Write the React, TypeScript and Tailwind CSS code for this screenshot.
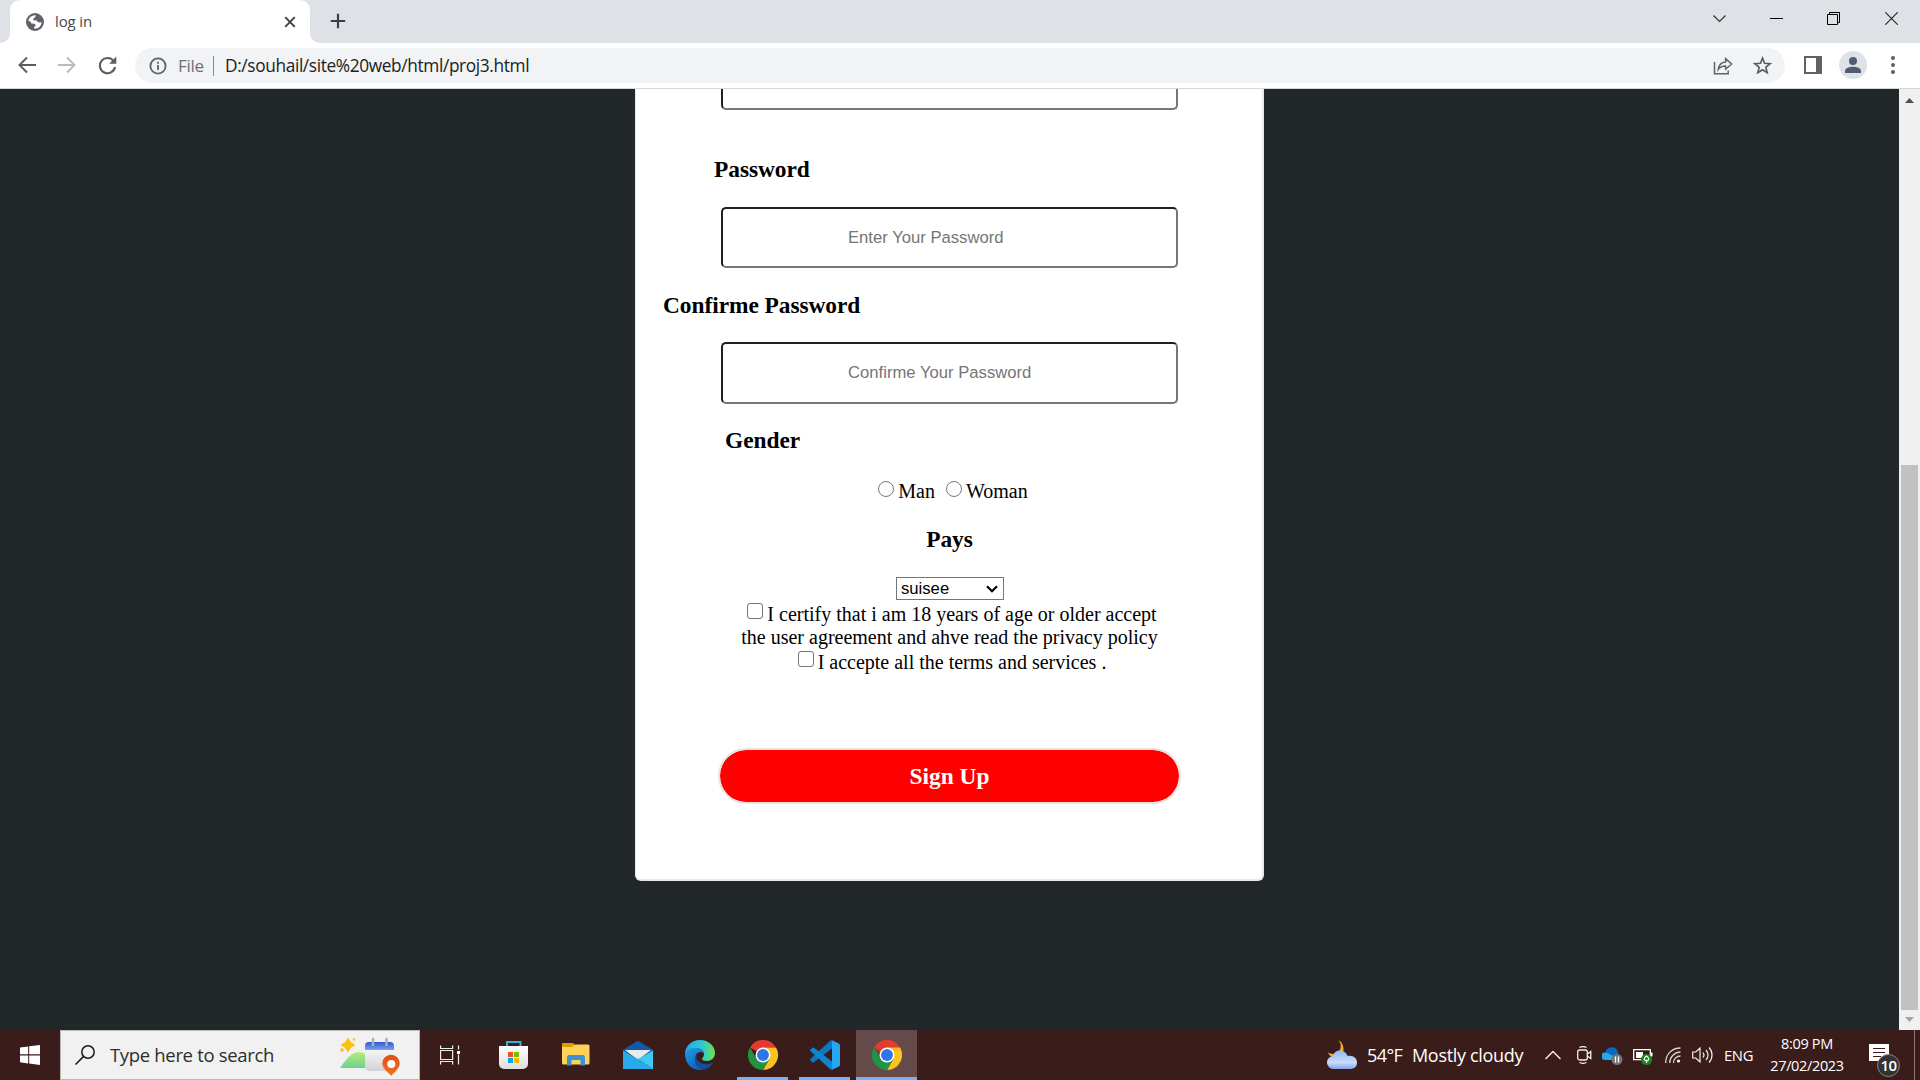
import React from "react";

const ui = "font-['Open_Sans',sans-serif]";

function Globe() {
  return (
    <svg className="size-[18px]" viewBox="0 0 18 18">
      <circle cx="9" cy="9" r="9" fill="#5f6368" />
      <path d="M2.300 8C2.800 4.600 5.600 2.200 9.700 2.200L9.200 4.200 7.300 5.500V7.200L10.800 7.600 12 9.300 15.700 9.600C15.200 13.200 12.500 15.700 8.500 15.800L8 14.300 9.800 12.600 8.600 10.800 5.400 10.400 4.300 8.500Z" fill="#fff" />
    </svg>
  );
}

function ChromeIcon() {
  return (
    <svg className="size-[30px]" viewBox="0 0 48 48">
      <path d="M24 24 3.2 12A24 24 0 0 1 44.8 12H24Z" fill="#e33b2e" />
      <path d="M24 12h20.8A24 24 0 0 1 24 48l10.4-18Z" fill="#fcc31e" />
      <path d="M13.6 30 3.2 12A24 24 0 0 0 24 48l10.4-18Z" fill="#229342" />
      <circle cx="24" cy="24" r="12" fill="#fff" />
      <circle cx="24" cy="24" r="9.5" fill="#2f75e8" />
    </svg>
  );
}

function Tab() {
  return (
    <div className="flex h-[43px] items-start bg-[#dee1e6]">
      <svg className="h-[43px] w-[320px] shrink-0 -mr-[320px]" viewBox="0 0 320 43">
        <path d="M0 43a10 10 0 0 0 10-10V10A10 10 0 0 1 20 0H300a10 10 0 0 1 10 10V33a10 10 0 0 0 10 10Z" fill="#fff" />
      </svg>
      <div className="z-10 flex h-[43px] w-[310px] items-center pl-[26px]">
        <Globe />
        <span className={`${ui} ml-[11px] -mt-px w-[60px] text-[15px] tracking-[-0.15px] text-[#45494d]`}>log in</span>
        <svg className="ml-[169px] size-3" viewBox="0 0 12 12" stroke="#3c4043" strokeWidth="1.9">
          <path d="m1.2 1.2 9.6 9.6M10.8 1.2 1.2 10.8" />
        </svg>
      </div>
      <svg className="mt-[13px] ml-[20px] size-4" viewBox="0 0 16 16" stroke="#3c4043" strokeWidth="2.2">
        <path d="M8 .8v14.4M.8 8h14.4" />
      </svg>
      <div className="ml-auto flex h-[37px] items-center pr-[22px]">
        <svg className="h-[13px] w-[13px]" viewBox="0 0 13 13" fill="none" stroke="#333" strokeWidth="1.2"><path d="m.5 3.5 6 6 6-6" /></svg>
        <svg className="ml-[44px] h-[13px] w-[13px]" viewBox="0 0 13 13" stroke="#000"><path d="M0 6.5h13" /></svg>
        <svg className="ml-[44px] h-[13px] w-[13px]" viewBox="0 0 13 13" fill="none" stroke="#000"><path d="M.5 2.5h10v10H.5ZM2.5 2.5v-2h10v10h-2" /></svg>
        <svg className="ml-[45px] h-[13px] w-[13px]" viewBox="0 0 13 13" stroke="#222" strokeWidth="1.1"><path d="m.3.3 12.4 12.4M12.7.3.3 12.7" /></svg>
      </div>
    </div>
  );
}

function Toolbar() {
  return (
    <div className="flex h-[46px] items-start border-b border-[#d5d7da] bg-white pt-[5px]">
      <div className="flex h-[34px] w-[135px] items-center pl-[17px]">
        <svg className="size-5" viewBox="0 0 20 20" fill="none" stroke="#5a5e63" strokeWidth="2"><path d="M19 10H3M10 2.5 2.5 10l7.5 7.5" /></svg>
        <svg className="ml-5 size-5" viewBox="0 0 20 20" fill="none" stroke="#babcbe" strokeWidth="2"><path d="M1 10h16M10 2.5l7.5 7.5-7.5 7.5" /></svg>
        <svg className="ml-5 size-5" viewBox="0 0 20 20" fill="none" stroke="#5a5e63" strokeWidth="2.1">
          <path d="M16.8 6.3A7.6 7.6 0 1 0 18 12" />
          <path d="M19.3 1.6v7.1h-7.1Z" fill="#5a5e63" stroke="none" />
        </svg>
      </div>
      <div className="flex h-[35px] w-[1650px] items-center rounded-full bg-[#f1f3f4] pl-[14px]">
        <svg className="size-[18px]" viewBox="0 0 18 18" fill="none" stroke="#5f6368" strokeWidth="1.8">
          <circle cx="9" cy="9" r="7.6" /><path d="M9 8v5M9 4.8v2" />
        </svg>
        <span className={`${ui} ml-[11px] w-[35px] text-[17px] tracking-[-0.3px] whitespace-nowrap text-[#6b6f73]`}>File</span>
        <span className="h-[20px] w-px bg-[#85898d]" />
        <span className={`${ui} ml-[11px] text-[17.3px] tracking-[-0.37px] whitespace-nowrap text-[#202124]`}>D:/souhail/site%20web/html/proj3.html</span>
        <svg className="ml-auto h-[18px] w-5" viewBox="0 0 20 18" fill="none" stroke="#5f6368" strokeWidth="1.5">
          <path d="M1.5 5v11.8h13.7v-3.4" />
          <path d="M5.2 12.4C5.8 7.8 8.4 5.3 12.6 5V1.6L18.6 7l-6 5.2V9C9.4 9 7 10 5.2 12.4Z" />
        </svg>
        <svg className="mr-[13px] ml-5 size-[19px]" viewBox="0 0 24 24" fill="none" stroke="#5a5e63" strokeWidth="2.1">
          <path d="m12 2.7 2.6 6.5 7 .5-5.4 4.5 1.7 6.8L12 17.3 6.1 21l1.7-6.8L2.4 9.7l7-.5Z" />
        </svg>
      </div>
      <div className="flex h-[34px] items-center">
        <span className="ml-[19px] box-border h-[18px] w-[18px] border-2 border-r-[6px] border-[#5f6368]" />
        <span className="ml-[17px] flex size-7 items-center justify-center rounded-full bg-[#dee1e6]">
          <svg className="size-4" viewBox="0 0 16 16" fill="#515c70"><circle cx="8" cy="4" r="4" /><path d="M0 16v-2c0-3 5-4.3 8-4.3s8 1.300 8 4.300v2Z" /></svg>
        </span>
        <svg className="ml-[24px] h-[18px] w-1" viewBox="0 0 4 18" fill="#5a5e63"><circle cx="2" cy="2" r="2" /><circle cx="2" cy="9" r="2" /><circle cx="2" cy="16" r="2" /></svg>
      </div>
    </div>
  );
}

const heading = "h-[27px] text-[23.4px] leading-[27px] font-bold tracking-[-0.05px] whitespace-nowrap";
const line = "flex h-[23px] justify-center text-[20px] leading-[23px] whitespace-nowrap";
const field =
  "ml-[85px] w-[457px] rounded-[5px] border-2 border-t-[#1e2021] border-l-[#1e2021] border-r-[#767676] border-b-[#767676] pl-[125px] font-['Liberation_Sans',sans-serif] text-[16.67px] text-[#757575] flex items-center whitespace-nowrap";
const box = "mr-[4px] size-[16px] shrink-0 border border-[#767676] bg-white";

function Form() {
  return (
    <div className="flex h-[792px] w-[629px] flex-col rounded-b-[6px] border-r-2 border-b-2 border-l border-[#e9e9ea] bg-white font-['Liberation_Serif',serif] text-black">
      <div className="ml-[85px] h-[21px] w-[457px] rounded-b-[5px] border-2 border-t-0 border-[#767676] border-l-[#1e2021]" />
      <h3 className={`${heading} mt-[46px] ml-[78px]`}>Password</h3>
      <div className={`${field} mt-[24px] h-[61px]`}>Enter Your Password</div>
      <h3 className={`${heading} mt-[24px] ml-[27px]`}>Confirme Password</h3>
      <div className={`${field} mt-[23px] h-[62px] pb-[2px]`}>Confirme Your Password</div>
      <h3 className={`${heading} mt-[23px] ml-[89px]`}>Gender</h3>
      <div className={`${line} mt-[26px] pl-[8px]`}>
        <span className={`${box} mt-px rounded-full`} />
        <span className="mr-[11px]">Man</span>
        <span className={`${box} mt-px rounded-full`} />
        <span>Woman</span>
      </div>
      <h3 className={`${heading} mt-[23px] pl-px text-center`}>Pays</h3>
      <div className="mt-[24px] ml-[260px] flex h-[23px] w-[108px] items-center justify-between border border-[#767676] pt-px pr-[5px] pl-[4px] font-['Liberation_Sans',sans-serif] text-[16.67px] leading-none">
        <span>suisee</span>
        <svg className="h-[8px] w-[12px]" viewBox="0 0 12 8" fill="none" stroke="#000" strokeWidth="2.2"><path d="m1 1.300 5 5 5-5" /></svg>
      </div>
      <div className={`${line} mt-[3px] pl-[6px]`}>
        <span className={`${box} rounded-[3px]`} />
        <span>I certify that i am 18 years of age or older accept</span>
      </div>
      <div className={`${line} pl-px`}>the user agreement and ahve read the privacy policy</div>
      <div className={`${line} mt-[2px] pl-[6px]`}>
        <span className={`${box} rounded-[3px]`} />
        <span>I accepte all the terms and services .</span>
      </div>
      <div className="mt-[74px] ml-[82px] flex h-[56px] w-[463px] items-center justify-center rounded-[28px] border-2 border-[#e9e3e3] bg-[#f00] bg-clip-padding pt-px text-[23.4px] font-bold text-white">
        Sign Up
      </div>
    </div>
  );
}

function ScrollBar() {
  return (
    <div className="flex w-[21px] flex-col items-center bg-[#f0f0f0]">
      <svg className="mt-[9px] h-[5px] w-[9px]" viewBox="0 0 9 5" fill="#505050"><path d="M0 5 4.500 0 9 5Z" /></svg>
      <div className="mt-[362px] h-[545px] w-[17px] bg-[#c1c1c1]" />
      <svg className="mt-[7px] h-[5px] w-[9px]" viewBox="0 0 9 5" fill="#a3a3a3"><path d="M0 0h9L4.500 5Z" /></svg>
    </div>
  );
}

function SearchArt() {
  return (
    <svg className="mt-[3px] h-[40px] w-[60px]" viewBox="0 0 60 40">
      <defs>
        <linearGradient id="hill" x2="0" y2="1"><stop stopColor="#b6ec78" /><stop offset="1" stopColor="#6fcf95" /></linearGradient>
        <linearGradient id="cal" x2="0" y2="1"><stop stopColor="#fafafc" /><stop offset="1" stopColor="#d2d2d6" /></linearGradient>
        <linearGradient id="calTop" x2="0" y2="1"><stop stopColor="#3156cf" /><stop offset="1" stopColor="#7ba3ee" /></linearGradient>
        <linearGradient id="pin" x2="0" y2="1"><stop stopColor="#e34d13" /><stop offset="1" stopColor="#f07422" /></linearGradient>
      </defs>
      <path d="M0 31C7 21 12 15 19 15s13 9 18 16Z" fill="url(#hill)" />
      <path d="M25 10h29v19a5 5 0 0 1-5 5H30a5 5 0 0 1-5-5Z" fill="url(#cal)" />
      <path d="M25 12V9a4 4 0 0 1 4-4h21a4 4 0 0 1 4 4v4H25Z" fill="url(#calTop)" />
      <path d="M33 2v6M46.500 2v6" stroke="#a9adb7" strokeWidth="2.500" strokeLinecap="round" />
      <path d="m8 2 2.300 3.700L14 8l-3.700 2.300L8 14l-2.300-3.700L2 8l3.700-2.300Z" fill="#fcc00d" stroke="#fcc00d" strokeWidth="1.500" />
      <circle cx="2" cy="13" r="1.800" fill="#fcc00d" /><circle cx="14" cy="2.500" r="1.200" fill="#fcc00d" />
      <path d="M51.300 39c-2-3-9-7-9-12.500a8.700 8.700 0 0 1 17.400 0C59.700 32 53.300 36 51.300 39Z" fill="url(#pin)" />
      <circle cx="51.300" cy="27" r="4" fill="#fff" />
    </svg>
  );
}

function Slot({ children, mark, active }: { children: React.ReactNode; mark?: boolean; active?: boolean }) {
  return (
    <div className={`flex h-[50px] w-[61px] flex-col items-center ${active ? "bg-[#644a48]" : ""}`}>
      <div className="flex h-[47px] items-center pt-[3px]">{children}</div>
      {mark && <div className={active ? "h-[3px] w-[61px] bg-[#76b2ee]" : "h-[3px] w-[51px] bg-[#76b2ee]"} />}
    </div>
  );
}

function TaskIcons() {
  return (
    <div className="flex">
      <div className="-ml-px flex h-[50px] w-[62px] items-center justify-center">
        <svg className="h-[20px] w-[20px]" viewBox="0 0 20 20" fill="none" stroke="#eee" strokeWidth="1.200">
          <path d="M.6 5.500h12v9H.6ZM.6.500v3h12v-3M.6 19.500v-3h12v3M18.500.500v4M18.500 9.500v10" />
          <path d="M17 6h3v3h-3Z" fill="#fff" stroke="none" />
        </svg>
      </div>
      <div className="w-[2px]" />
      <div className="flex gap-x-[1px]">
        <Slot>
          <svg className="h-[30px] w-[30px]" viewBox="0 0 30 30">
            <defs><linearGradient id="bag" x2="0" y2="1"><stop stopColor="#fff" /><stop offset="1" stopColor="#dedede" /></linearGradient></defs>
            <path d="M8 7V2h13.500v5" fill="none" stroke="#34b1e4" strokeWidth="2" />
            <path d="M0 6h29v18a5 5 0 0 1-5 5H5a5 5 0 0 1-5-5Z" fill="url(#bag)" />
            <path d="M9 12h5v5H9Z" fill="#f25022" /><path d="M15 12h5v5h-5Z" fill="#7fba00" />
            <path d="M9 18h5v5H9Z" fill="#00a4ef" /><path d="M15 18h5v5h-5Z" fill="#ffb900" />
          </svg>
        </Slot>
        <Slot>
          <svg className="h-[30px] w-[30px]" viewBox="0 0 30 30">
            <path d="M1 4a1 1 0 0 1 1-1h10l2 2v4H1Z" fill="#dd9b08" />
            <path d="M1 7h10l3-2.500h13a1.500 1.500 0 0 1 1.500 1.500v17a1.500 1.500 0 0 1-1.500 1.500H2.500A1.500 1.500 0 0 1 1 23Z" fill="#ffd257" />
            <path d="M6 25.500V17a2 2 0 0 1 2-2h14a2 2 0 0 1 2 2v8.500h-4.500V21a1 1 0 0 0-1-1h-7a1 1 0 0 0-1 1v4.500Z" fill="#3d92d4" />
          </svg>
        </Slot>
        <Slot>
          <svg className="h-[30px] w-[30px]" viewBox="0 0 30 30">
            <path d="M0 10 13.500 1.500a3 3 0 0 1 3 0L30 10v4H0Z" fill="#0f5ba7" />
            <path d="M2 10h26L15 20Z" fill="#e9eaec" />
            <path d="M0 10.500 15 19 30 29H0Z" fill="#29a9e7" /><path d="M30 10.500 15 19l15 10Z" fill="#40caf3" />
          </svg>
        </Slot>
        <Slot>
          <svg className="h-[30px] w-[30px]" viewBox="0 0 30 30">
            <defs>
              <linearGradient id="edgeTop"><stop stopColor="#22a9e8" /><stop offset=".55" stopColor="#2cc7d8" /><stop offset="1" stopColor="#6ee348" /></linearGradient>
              <linearGradient id="edgeSide" x2=".6" y2="1"><stop stopColor="#1da0e8" /><stop offset="1" stopColor="#0b5fb8" /></linearGradient>
            </defs>
            <path d="M0 14C0 6 7 0 15 0c9 0 15 6.500 15 13 0 5-4 8-8 8-3 0-5-1-5-2s2-2 2-5c0-3-3-5.500-7-5.500C6 8.500 1 11 0 14Z" fill="url(#edgeTop)" />
            <path d="M0 14c1-4 5-6 10-6 4 0 8 2 9 5-6-3-10 2-8 7 2 6 8 9 12 7-2 2-5 3-8 3C6 30 0 23 0 14Z" fill="url(#edgeSide)" />
            <path d="M11.500 14.500c-4 5-1 14 7 15 4-.500 8-3.500 9.500-7-5 3-13 2-16-3-.7-1.500-.8-3.500-.500-5Z" fill="#114f9e" />
          </svg>
        </Slot>
        <div className="-mr-px pl-px"><Slot mark><ChromeIcon /></Slot></div>
        <div className="pl-px"><Slot mark>
          <svg className="h-[30px] w-[30px]" viewBox="0 0 30 30">
            <path d="M22 8.500 4 22.200a1.500 1.500 0 0 1-1.700 0L.6 20.600a1.200 1.200 0 0 1 0-1.800L20.500.600 22 .300Z" fill="#0b78c0" />
            <path d="M22 21.500 4 7.800a1.500 1.500 0 0 0-1.700 0L.6 9.400a1.200 1.200 0 0 0 0 1.800l19.900 18.200 1.500.300Z" fill="#0c86d1" />
            <path d="M22 .2 28.500 3.300A2.500 2.500 0 0 1 30 5.600v18.800a2.500 2.500 0 0 1-1.500 2.300L22 29.800Z" fill="#26a6f1" />
          </svg>
        </Slot></div>
      </div>
      <div className="ml-px flex"><Slot mark active><ChromeIcon /></Slot></div>
    </div>
  );
}

function Tray() {
  return (
    <div className={`${ui} ml-auto flex h-[50px] items-center whitespace-nowrap text-white`}>
      <svg className="mr-[10px] h-[30px] w-[30px]" viewBox="0 0 30 30">
        <defs><linearGradient id="cloud" x2="0" y2="1"><stop stopColor="#8db8f4" /><stop offset=".65" stopColor="#c9dcfa" /><stop offset="1" stopColor="#82a5e8" /></linearGradient></defs>
        <path d="M11.500.5c3 3 3 8 0 11-3 3-7 3-10.500 1 1 3 4 5 8 5 5 0 8-4 7.500-9-.300-4-2-7-5-8Z" fill="#f6a82c" />
        <path d="M7 29a6.500 6.500 0 0 1-1-13C7 12 10 10.500 13 10.500s6.500 2 7.500 5.500C26 15 30 18 30 22.500S27 29 23 29Z" fill="url(#cloud)" />
      </svg>
      <span className="w-[45px] text-[18px] tracking-[-0.6px]">54°F</span>
      <span className="w-[133px] text-[18px] tracking-[-0.32px]">Mostly cloudy</span>
      <svg className="h-[10px] w-[16px]" viewBox="0 0 16 10" fill="none" stroke="#f3eeee" strokeWidth="1.500"><path d="m.5 9 7.500-7.500L15.500 9" /></svg>
      <svg className="ml-[16px] h-[18px] w-[15px]" viewBox="0 0 15 18" fill="none" stroke="#f3eeee" strokeWidth="1.300">
        <rect x=".7" y="4" width="9.600" height="10" rx="2" /><path d="m10.300 8 3.500-2.500v7L10.300 10M2.500 1.500c2-1 5-1 7 0M2.500 16.500c2 1 5 1 7 0" />
      </svg>
      <svg className="ml-[10px] h-[20px] w-[22px]" viewBox="0 0 22 20">
        <path d="M4 15a4 4 0 0 1-.5-7.800A6.500 6.500 0 0 1 15.500 5.500L17 10v5Z" fill="#0869bf" />
        <path d="M3 15a3.700 3.700 0 0 1 0-7.500c3 0 5 2 9 4L17 15Z" fill="#28a8ea" />
        <circle cx="15" cy="14.500" r="5.500" fill="#747474" /><path d="M13.500 11.500v6M16.500 11.500v6" stroke="#fff" strokeWidth="1.300" />
      </svg>
      <svg className="ml-[9px] h-[20px] w-[20px]" viewBox="0 0 20 20" fill="none">
        <path d="M.700 4.700h16.600v10H.700Z" stroke="#fff" strokeWidth="1.300" /><path d="M3 7h7v6H3ZM18 7.500h1.500v4H18Z" fill="#fff" />
        <circle cx="13.500" cy="14.500" r="5.500" fill="#138a21" /><path d="M13.500 18v-3M13.500 11c-3 2-3 4.500 0 4.500s3-2.500 0-4.500Z" stroke="#fff" strokeWidth="1.200" />
      </svg>
      <svg className="ml-[12px] h-[17px] w-[16px]" viewBox="0 0 16 17" fill="none" stroke="#d9cece" strokeWidth="1.300">
        <path d="M.700 16C.700 7 7 1 15.500 1M4.700 16c0-6 5-11 10.800-11M8.500 16c0-4 3-7 7-7" /><circle cx="13.500" cy="14" r="1.600" fill="#fff" stroke="none" />
      </svg>
      <svg className="ml-[11px] h-[18px] w-[22px]" viewBox="0 0 22 18" fill="none" stroke="#f3eeee" strokeWidth="1.200">
        <path d="M.7 6h3L8 2.200v13.600L3.700 12h-3ZM11 6.500c1.200 1.500 1.200 3.500 0 5M14 4c2.500 3 2.500 7 0 10M17 1.500c4 4 4 11 0 15" />
      </svg>
      <span className="ml-[10px] w-[30px] text-[14.8px] tracking-[-0.35px]">ENG</span>
      <div className="ml-[14px] flex w-[78px] flex-col items-center text-[14.500px] leading-[22.500px] tracking-[-0.35px]">
        <span>8:09 PM</span>
        <span>27/02/2023</span>
      </div>
      <svg className="ml-[23px] h-[32px] w-[32px]" viewBox="0 0 32 32">
        <path d="M0 5h20v17H9l-4 0H0Z" fill="#fff" />
        <path d="M4 9.500h12M4 13.500h12M4 17.500h8" stroke="#3a1c1a" strokeWidth="1.200" />
      </svg>
      <div className="z-10 mt-[20px] -ml-[24px] flex size-[23px] items-center justify-center rounded-full border border-[#8b8080] bg-[#343333] text-[15px] leading-none font-semibold tracking-[-0.6px]">10</div>
      <div className="ml-[14px] h-[50px] w-px bg-[#8b7574]" />
      <div className="w-[5px]" />
    </div>
  );
}

export default function App() {
  return (
    <div className="flex h-[1080px] w-[1920px] flex-col overflow-hidden bg-[#22272a]">
      <Tab />
      <Toolbar />
      <div className="flex h-[941px] justify-between">
        <div className="flex w-[1899px] justify-center">
          <Form />
        </div>
        <ScrollBar />
      </div>
      <div className="flex h-[50px] items-center bg-[#3a1c1a]">
        <div className="flex w-[60px] justify-center">
          <svg className="size-5" viewBox="0 0 20 20" fill="#fff"><path d="M0 2.600 8.200 1.500v7.800H0ZM9.200 1.300 20 0v9.300H9.200ZM0 10.400h8.200v8L0 17.300ZM9.200 10.400H20V20L9.200 18.600Z" /></svg>
        </div>
        <div className="flex h-[50px] w-[360px] items-center border border-[#bcb9b9] bg-[#f1f1f1] pl-[14px]">
          <svg className="size-5" viewBox="0 0 20 20" fill="none" stroke="#1b1b1b" strokeWidth="1.500"><circle cx="13" cy="7" r="6.200" /><path d="M8.600 11.400.500 19.500" /></svg>
          <span className={`${ui} ml-[15px] w-[230px] text-[18.500px] tracking-[-0.330px] whitespace-nowrap text-[#2d2d2d]`}>Type here to search</span>
          <SearchArt />
        </div>
        <TaskIcons />
        <Tray />
      </div>
    </div>
  );
}
